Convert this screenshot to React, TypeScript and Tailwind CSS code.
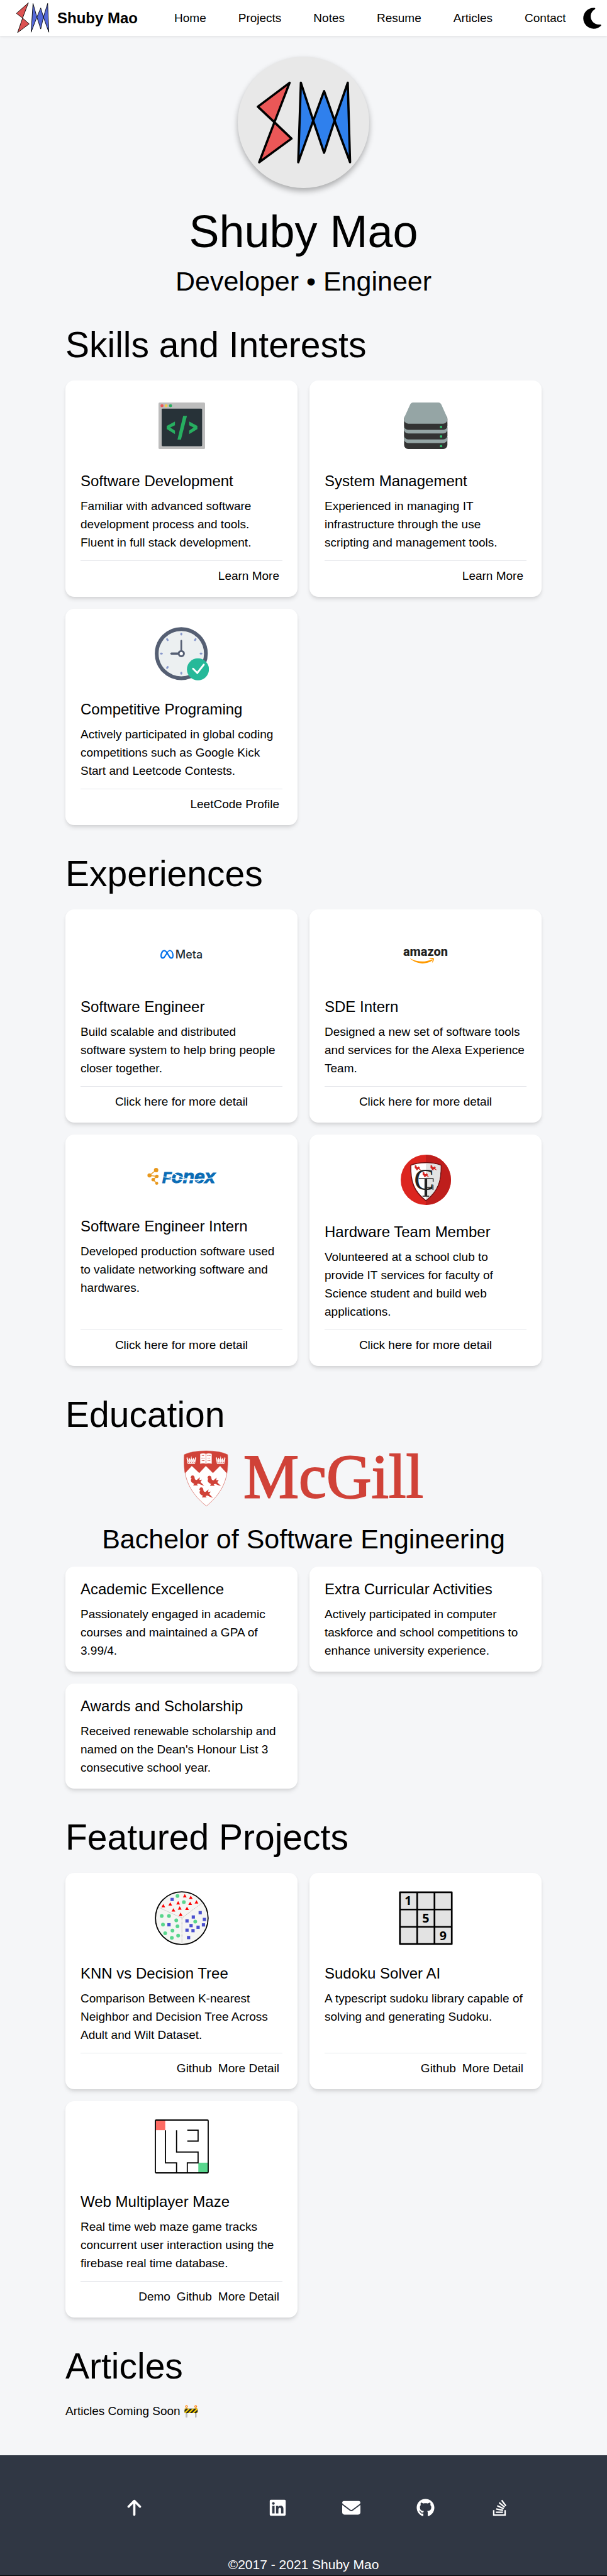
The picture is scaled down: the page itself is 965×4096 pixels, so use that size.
import type { ReactNode } from "react";
import {
  FaArrowUp,
  FaEnvelope,
  FaGithub,
  FaLinkedin,
  FaMoon,
  FaStackOverflow,
} from "react-icons/fa6";
import { SiMeta } from "react-icons/si";

const NAV_LINKS = ["Home", "Projects", "Notes", "Resume", "Articles", "Contact"];

function NavLogo() {
  return (
    <svg viewBox="40 3 94 86" className="h-[51px] w-14" aria-hidden="true">
      <g stroke="#000" strokeWidth="1.5" strokeLinejoin="round">
        <path fill="#dc5252" d="M75.4 5.4 43.4 33.9 59.9 46.4ZM59.9 46.4 77.5 62.1 46.5 85.4Z" />
        <path
          fill="#5468d8"
          d="M87.8 7.1 82.7 84.3 98.2 43.9ZM108.5 19.3 98.2 43.9 108.5 75.7 115.7 43.9ZM127.1 7.1 130.2 84.3 115.7 43.9Z"
        />
      </g>
    </svg>
  );
}

function HeroLogo() {
  return (
    <svg viewBox="0 0 350 350" className="size-full" role="img" aria-label="Shuby Mao logo">
      <g stroke="#000" strokeWidth="6" strokeLinejoin="round">
        <path fill="#eb5757" d="M138 69.6 53.5 133.4 97.6 174.8ZM97.6 174.8 143 218.4 57 281.4Z" />
        <path
          fill="#2f80ed"
          d="M168 69.6 161 281.4 200.9 170.5ZM229.8 92 200.9 170.5 229.8 256 257.7 170.5ZM292.8 69.6 299 281.4 257.7 170.5Z"
        />
      </g>
    </svg>
  );
}

function CodeIcon() {
  return (
    <svg viewBox="0 0 124 124" className="size-[74px]" aria-hidden="true">
      <rect width="124" height="124" rx="3" fill="#bdbdbd" />
      <rect x="8.4" y="16.2" width="107.8" height="100.4" rx="2.5" fill="#273238" />
      <circle cx="9.3" cy="8.7" r="4" fill="#eb5757" />
      <circle cx="20.2" cy="8.7" r="4" fill="#f2c94c" />
      <circle cx="32" cy="8.7" r="4" fill="#27ae60" />
      <g fill="#27ae60">
        <path d="M43.8 50.6 21.9 62.5V70.8L43.8 84.2V75.1L31.2 66.8 43.8 60.9Z" />
        <path d="M81.7 50.6 103.6 62.5V70.8L81.7 84.2V75.1L93.5 66.8 81.7 60.9Z" />
        <path d="M65.7 35.6H75.8L59.8 98.9H50.5Z" />
      </g>
    </svg>
  );
}

function ServerIcon() {
  return (
    <svg viewBox="-4 0 124 124" className="size-[74px]" aria-hidden="true">
      <rect y="82" width="115.4" height="42" rx="11" fill="#333" />
      <rect y="68" width="115.4" height="40" rx="11" fill="#95a5a5" />
      <rect y="56" width="115.4" height="42.5" rx="11" fill="#333" />
      <rect y="44" width="115.4" height="38.6" rx="11" fill="#95a5a5" />
      <rect y="33" width="115.4" height="39.8" rx="11" fill="#333" />
      <path
        fill="#95a5a5"
        d="M24 0H91.4Q97 0 99.5 6L114 38Q117 47 113 52Q110 56.5 104 56.5H11.4Q5.4 56.5 2.4 52Q-1.6 47 1.4 38L16 6Q18.5 0 24 0Z"
      />
      <g fill="#2ecc71">
        <circle cx="98.5" cy="65.2" r="3.2" />
        <circle cx="98.5" cy="90.5" r="3.2" />
        <circle cx="98.5" cy="116.2" r="3.2" />
      </g>
    </svg>
  );
}

function ClockIcon() {
  return (
    <svg viewBox="0 0 144 142" className="h-[85px] w-[86px]" aria-hidden="true">
      <circle cx="70.7" cy="70.7" r="65.5" fill="#ecf0f1" stroke="#555f73" strokeWidth="10" />
      <g stroke="#8697cb" strokeWidth="5" strokeLinecap="round">
        <path d="M70.7 17.5v2.5M70.7 121.5v2.5M16.5 70.7h2.5M122 70.7h2.5M108.6 32.3l-1.4 2.4M33 32.3l1.4 2.4M33 108.8l1.4-2.4" />
      </g>
      <g stroke="#555f73" strokeLinecap="round">
        <path strokeWidth="4.5" d="M70.7 36.5V61" />
        <path strokeWidth="6" d="M44.5 70.7H61" />
      </g>
      <circle cx="70.7" cy="70.7" r="7" fill="#fff" stroke="#555f73" strokeWidth="5" />
      <circle cx="115" cy="112.5" r="29.3" fill="#26b999" />
      <path
        d="M102 110.7 113.3 122 130.5 100"
        fill="none"
        stroke="#fff"
        strokeWidth="5"
        strokeLinecap="round"
      />
    </svg>
  );
}

const GREEN_DOTS = [
  [60.6, 13], [77.5, 29.1], [18.5, 66.2], [37.9, 66.2], [57.3, 77.7], [21.9, 89.2],
  [60.6, 93.8], [47.2, 104.9], [27.8, 112.1], [62.3, 118.6], [45.5, 124.4], [107.8, 81.1],
];
const BLUE_SQUARES = [
  [46.3, 22.2], [37.9, 89.6], [121, 57.4], [102.7, 68.9], [85.9, 79.2], [132.2, 75.4],
  [129.7, 89.9], [96.8, 91.8], [115.4, 96.1], [85.9, 104.1], [101.9, 105.2], [90.1, 123.6],
];
const RED_TRIANGLES = [
  [80, 12.2], [96, 16.5], [111.1, 28.7], [22.7, 38.7], [41.3, 34.1], [62.3, 31],
  [94.3, 32.5], [66.5, 44.8], [85.9, 45.9], [49.7, 50.1], [69, 61.6],
];

function KnnIcon() {
  return (
    <svg viewBox="0 0 144 144" className="size-[86px]" aria-hidden="true">
      <circle cx="72" cy="72" r="70" fill="#f5f5f3" stroke="#000" strokeWidth="3" />
      <path
        d="M72.4 71.6 8.4 42.5M72.4 71.6 125.5 31.8M72.4 71.6V140"
        stroke="#888"
        strokeDasharray="2 1.5"
      />
      {GREEN_DOTS.map(([x, y]) => (
        <circle key={`${x}-${y}`} cx={x} cy={y} r="5" fill="#59d68d" />
      ))}
      {BLUE_SQUARES.map(([x, y]) => (
        <rect key={`${x}-${y}`} x={x - 4.3} y={y - 4.3} width="8.6" height="8.6" fill="#4a50cf" />
      ))}
      {RED_TRIANGLES.map(([x, y]) => (
        <path key={`${x}-${y}`} d={`M${x} ${y - 4.5}l5 9h-10Z`} fill="#f00" />
      ))}
    </svg>
  );
}

function SudokuIcon() {
  return (
    <svg viewBox="0 0 144 144" className="size-[86px]" aria-hidden="true">
      <path
        d="M3 3H141V141H3ZM49 3V141M95 3V141M3 49H141M3 95H141"
        fill="#e3e3e3"
        stroke="#000"
        strokeWidth="4.5"
        strokeLinejoin="round"
      />
      <g fontFamily="Open Sans, sans-serif" fontWeight="700" fontSize="33" textAnchor="middle">
        <text x="25" y="37.5">1</text>
        <text x="72" y="84">5</text>
        <text x="118" y="130">9</text>
      </g>
    </svg>
  );
}

function MazeIcon() {
  return (
    <svg viewBox="0 0 144 144" className="size-[86px]" aria-hidden="true">
      <path fill="#fd6b63" d="M2 2H28V28.7H2Z" />
      <path fill="#59d68d" d="M116 115.2H142V142H116Z" />
      <g fill="none" stroke="#000" strokeWidth="3">
        <rect x="1.7" y="1.7" width="140.6" height="140.6" rx="2" />
        <path d="M28.6 28.7V115.6H58.1V142M58.1 28.7V86.9H115.4V115.6H86.7V142M86.7 28.7H115.4V57.8H86.7" />
      </g>
    </svg>
  );
}

function MetaLogo() {
  return (
    <div className="flex items-center gap-[3px] font-['Inter',sans-serif] text-lg/6 font-medium text-[#1c2b33]">
      <SiMeta className="size-[21px] text-[#0673eb]" aria-hidden="true" />
      <span>Meta</span>
    </div>
  );
}

function AmazonLogo() {
  return (
    <div className="flex flex-col items-center font-['Roboto',sans-serif] text-xl/5 font-extrabold text-[#221f1f]">
      <span>amazon</span>
      <svg viewBox="0 0 76 20" className="mr-3 h-[10px] w-[38px]" aria-hidden="true">
        <path fill="#ff9a00" d="M0 1.5C22 14 48 14.5 68 5.5C71 4 73 7 70 9C50 22 22 21 .5 3.2Z" />
        <path fill="#ff9a00" d="M61 2.5C65-.5 73-.5 75.5 1.5C76.5 5 74.5 11.5 71 15C70 15.5 69.3 15.2 69.7 14.3C71 11 72.3 6 71.2 4.7C70 3.3 65 3.6 62 3.9C60.8 4 60.5 3.2 61 2.5Z" />
      </svg>
    </div>
  );
}

function FonexLogo() {
  return (
    <svg viewBox="0 0 188 48" className="h-7 w-[112px] overflow-visible" role="img" aria-label="Fonex">
      <path d="M24 6 6 20.4 26 23.3 16 32 25.7 42" fill="none" stroke="#e8981d" strokeWidth="2.5" />
      <g fill="#e8981d">
        <circle cx="24" cy="6" r="6" />
        <circle cx="6" cy="20.4" r="5.6" />
        <circle cx="26" cy="23.3" r="4.7" />
        <circle cx="16" cy="32" r="4.7" />
        <circle cx="25.7" cy="42" r="4.2" />
      </g>
      <text
        x="41"
        y="41"
        fill="#0a6cb5"
        stroke="#0a6cb5"
        strokeWidth="2"
        fontFamily="Liberation Sans, sans-serif"
        fontWeight="700"
        fontStyle="italic"
        fontSize="51"
      >
        <tspan fontSize="41">F</tspan>onex
      </text>
      <path
        d="M44 24C80 33 130 36 178 27M70 14C92 28 118 33 146 33M128 42Q142 36 150 29"
        fill="none"
        stroke="#fff"
        strokeWidth="2"
      />
    </svg>
  );
}

const BIRD =
  "M2 1C6-2 11 1 11 6C11 10 13 12 17 12L25 5 24 12 31 11 27 17 28 19 37 28 28 25 22 22 17 23 20 27H7L10 22C3 20 0 15 1 11L3 8 0 6Z";

function CrestLogo() {
  return (
    <svg viewBox="0 0 134 134" className="size-20" role="img" aria-label="Computer taskforce crest">
      <circle cx="67" cy="67" r="67" fill="#dc251f" />
      <path d="M67 0A67 67 0 0 1 67 134Z" fill="#be1e1c" />
      <path
        d="M27 28Q45 21 67 21.5Q89 21 107.5 28C108.5 70 100 97 67 122.5C34 97 26 70 27 28Z"
        fill="#fff"
        stroke="#6f1011"
        strokeWidth="2.5"
      />
      <path d="M67 23Q88 22.5 106 29C107 69 99 96 67 121Z" fill="#e3e3e3" />
      <g fill="#d3211e">
        <path transform="translate(37 28) scale(.48)" d={BIRD} />
        <path transform="translate(79 28) scale(.48)" d={BIRD} />
      </g>
      <text x="35.5" y="94" fontSize="80" fill="#222" fontFamily="Liberation Serif, serif">
        C
      </text>
      <g fill="none" stroke="#222">
        <path strokeWidth="7" d="M67 63V110" />
        <path strokeWidth="2.4" d="M48 64H86.5M86.5 63V72M67 87H84M86 80V94M58 110.500H76" />
      </g>
      <path fill="#d3211e" transform="translate(58 46) scale(.48)" d={BIRD} />
    </svg>
  );
}

const CROWN =
  "M0 5 2 3 5 12 7 4 11 11 13 0 15 11 19 4 21 12 24 3 26 5 23 21H3Z";

function McGillShield() {
  return (
    <svg viewBox="-1 -1 121 152" className="h-[90px] w-[71px]" aria-hidden="true">
      <path
        d="M.5 10.3Q20 0 60 0Q99 0 118 10.3C121 60 115 105 60.6 149.5C5 105-2 60 .5 10.3Z"
        fill="#fff"
        stroke="#d04238"
      />
      <path
        d="M.5 10.3Q20 0 60 0Q99 0 118 10.3C119 30 118.5 45 116 61L97.7 41 78.3 60 59 41 41.3 60 21 41 2.5 61C0 45-.5 30 .5 10.3Z"
        fill="#d04238"
      />
      <path d="M43.8 8Q52 5.5 59.4 8Q67 5.5 75 8V34.8Q67 32.5 59.4 34.8Q52 32.5 43.8 34.8Z" fill="#fff" />
      <path
        d="M59.4 8V34M48 12.5h7M47 19.5h9M48 26.5h8M63 12.5h9M64 19.5h6M64 26.5h7"
        stroke="#d04238"
        strokeWidth="1.6"
        strokeDasharray="2.5 .7"
      />
      <g fill="#fff">
        <path transform="translate(6.7 13.8)" d={CROWN} />
        <path transform="translate(86.2 13.8)" d={CROWN} />
      </g>
      <path
        d="M10 27.5h20M11 31.5h18M89.5 27.5h20M90.5 31.5h18"
        stroke="#d04238"
        strokeWidth="1.2"
        strokeDasharray="3 2"
      />
      <g fill="#d04238">
        <path transform="translate(17.7 66.8)" d={BIRD} />
        <path transform="translate(63.2 67.6)" d={BIRD} />
        <path transform="translate(41.3 99.2)" d={BIRD} />
      </g>
    </svg>
  );
}

function SectionTitle({ children }: { children: ReactNode }) {
  return <h2 className="mt-12 mb-7 text-[57px]/[58px]">{children}</h2>;
}

function CardGrid({ children }: { children: ReactNode }) {
  return <div className="grid grid-cols-2 gap-[19px]">{children}</div>;
}

function Card({
  title,
  text,
  image,
  imageClass = "",
  children,
}: {
  title: string;
  text: string;
  image?: ReactNode;
  imageClass?: string;
  children?: ReactNode;
}) {
  return (
    <article className="flex flex-col rounded-[14px] bg-white px-6 py-[19px] shadow-[0_5px_7px_-1px_rgba(0,0,0,0.1),0_2px_5px_-1px_rgba(0,0,0,0.08)]">
      {image && <div className={`mt-[5px] flex items-center justify-center ${imageClass}`}>{image}</div>}
      <h3 className="mb-2 text-2xl/[34px]">{title}</h3>
      <p className="text-[19px]/[29px]">{text}</p>
      {children && <div className="mt-auto pt-[14px]">{children}</div>}
    </article>
  );
}

function CardLinks({ links }: { links: string[] }) {
  return (
    <div className="flex justify-end gap-[10px] border-t border-[#e5e7eb] px-[5px] pt-[9px] text-[19px]/[29px]">
      {links.map((link) => (
        <a key={link} href="#">
          {link}
        </a>
      ))}
    </div>
  );
}

function DetailButton() {
  return (
    <div className="flex justify-center border-t border-[#e5e7eb] pt-[9px] text-[19px]/[29px]">
      <button type="button">Click here for more detail</button>
    </div>
  );
}

export default function App() {
  return (
    <div className="bg-[#f5f6f8] font-['Liberation_Sans',Arial,sans-serif] text-black">
      <header className="flex h-[57px] items-center bg-white pr-[9px] pl-6 shadow-[0_1px_4px_rgba(0,0,0,0.1)]">
        <a href="#" className="flex items-center gap-[11px] text-2xl font-bold">
          <NavLogo />
          <span>Shuby Mao</span>
        </a>
        <nav className="ml-[58px] flex gap-[51px] text-[19px]/[29px]">
          {NAV_LINKS.map((link) => (
            <a key={link} href="#">
              {link}
            </a>
          ))}
        </nav>
        <button type="button" aria-label="Toggle dark mode" className="ml-auto">
          <FaMoon className="h-[38px] w-[29px]" />
        </button>
      </header>

      <main className="px-[104px] pt-[33px] pb-14">
        <div className="mx-auto size-[209px] rounded-full bg-[#e8e8e8] shadow-[0_5px_10px_rgba(0,0,0,0.3)]">
          <HeroLogo />
        </div>
        <h1 className="mt-[33px] text-center text-7xl/[72px]">Shuby Mao</h1>
        <p className="mt-[19px] text-center text-[43px]/[48px]">Developer • Engineer</p>

        <SectionTitle>Skills and Interests</SectionTitle>
        <CardGrid>
          <Card
            title="Software Development"
            text="Familiar with advanced software development process and tools. Fluent in full stack development."
            image={<CodeIcon />}
            imageClass="h-[95px] mb-6"
          >
            <CardLinks links={["Learn More"]} />
          </Card>
          <Card
            title="System Management"
            text="Experienced in managing IT infrastructure through the use scripting and management tools."
            image={<ServerIcon />}
            imageClass="h-[95px] mb-6"
          >
            <CardLinks links={["Learn More"]} />
          </Card>
          <Card
            title="Competitive Programing"
            text="Actively participated in global coding competitions such as Google Kick Start and Leetcode Contests."
            image={<ClockIcon />}
            imageClass="h-[95px] mb-6"
          >
            <CardLinks links={["LeetCode Profile"]} />
          </Card>
        </CardGrid>

        <SectionTitle>Experiences</SectionTitle>
        <CardGrid>
          <Card
            title="Software Engineer"
            text="Build scalable and distributed software system to help bring people closer together."
            image={<MetaLogo />}
            imageClass="h-[95px] mb-[19px]"
          >
            <DetailButton />
          </Card>
          <Card
            title="SDE Intern"
            text="Designed a new set of software tools and services for the Alexa Experience Team."
            image={<AmazonLogo />}
            imageClass="h-[95px] mb-[19px]"
          >
            <DetailButton />
          </Card>
          <Card
            title="Software Engineer Intern"
            text="Developed production software used to validate networking software and hardwares."
            image={<FonexLogo />}
            imageClass="h-[86px] mb-[19px]"
          >
            <DetailButton />
          </Card>
          <Card
            title="Hardware Team Member"
            text="Volunteered at a school club to provide IT services for faculty of Science student and build web applications."
            image={<CrestLogo />}
            imageClass="h-[95px] mb-[19px]"
          >
            <DetailButton />
          </Card>
        </CardGrid>

        <SectionTitle>Education</SectionTitle>
        <div className="flex justify-center gap-6">
          <McGillShield />
          <span className="font-['Liberation_Serif',serif] text-[99px]/[83px] text-[#d04238] [-webkit-text-stroke:2px_#d04238]">
            McGill
          </span>
        </div>
        <p className="mt-[27px] mb-5 text-center text-[43px]/[48px]">Bachelor of Software Engineering</p>
        <CardGrid>
          <Card
            title="Academic Excellence"
            text="Passionately engaged in academic courses and maintained a GPA of 3.99/4."
          />
          <Card
            title="Extra Curricular Activities"
            text="Actively participated in computer taskforce and school competitions to enhance university experience."
          />
          <Card
            title="Awards and Scholarship"
            text="Received renewable scholarship and named on the Dean's Honour List 3 consecutive school year."
          />
        </CardGrid>

        <SectionTitle>Featured Projects</SectionTitle>
        <CardGrid>
          <Card
            title="KNN vs Decision Tree"
            text="Comparison Between K-nearest Neighbor and Decision Tree Across Adult and Wilt Dataset."
            image={<KnnIcon />}
            imageClass="h-[95px] mb-6"
          >
            <CardLinks links={["Github", "More Detail"]} />
          </Card>
          <Card
            title="Sudoku Solver AI"
            text="A typescript sudoku library capable of solving and generating Sudoku."
            image={<SudokuIcon />}
            imageClass="h-[95px] mb-6"
          >
            <CardLinks links={["Github", "More Detail"]} />
          </Card>
          <Card
            title="Web Multiplayer Maze"
            text="Real time web maze game tracks concurrent user interaction using the firebase real time database."
            image={<MazeIcon />}
            imageClass="h-[95px] mb-6"
          >
            <CardLinks links={["Demo", "Github", "More Detail"]} />
          </Card>
        </CardGrid>

        <SectionTitle>Articles</SectionTitle>
        <p className="text-[19px]/[29px]">Articles Coming Soon 🚧</p>
      </main>

      <footer className="border-b border-black bg-[#303744] px-28 pt-[69px] pb-[5px] text-white">
        <div className="flex items-center justify-between text-[29px]">
          <a href="#" aria-label="Back to top" className="flex w-[27.5%] justify-center">
            <FaArrowUp />
          </a>
          <div className="grid w-[63.5%] grid-cols-4 justify-items-center">
            <a href="#" aria-label="LinkedIn">
              <FaLinkedin />
            </a>
            <a href="#" aria-label="Email">
              <FaEnvelope />
            </a>
            <a href="#" aria-label="GitHub">
              <FaGithub />
            </a>
            <a href="#" aria-label="Stack Overflow">
              <FaStackOverflow />
            </a>
          </div>
        </div>
        <p className="mt-16 text-center text-[21px]/6">©2017 - 2021 Shuby Mao</p>
      </footer>
    </div>
  );
}
